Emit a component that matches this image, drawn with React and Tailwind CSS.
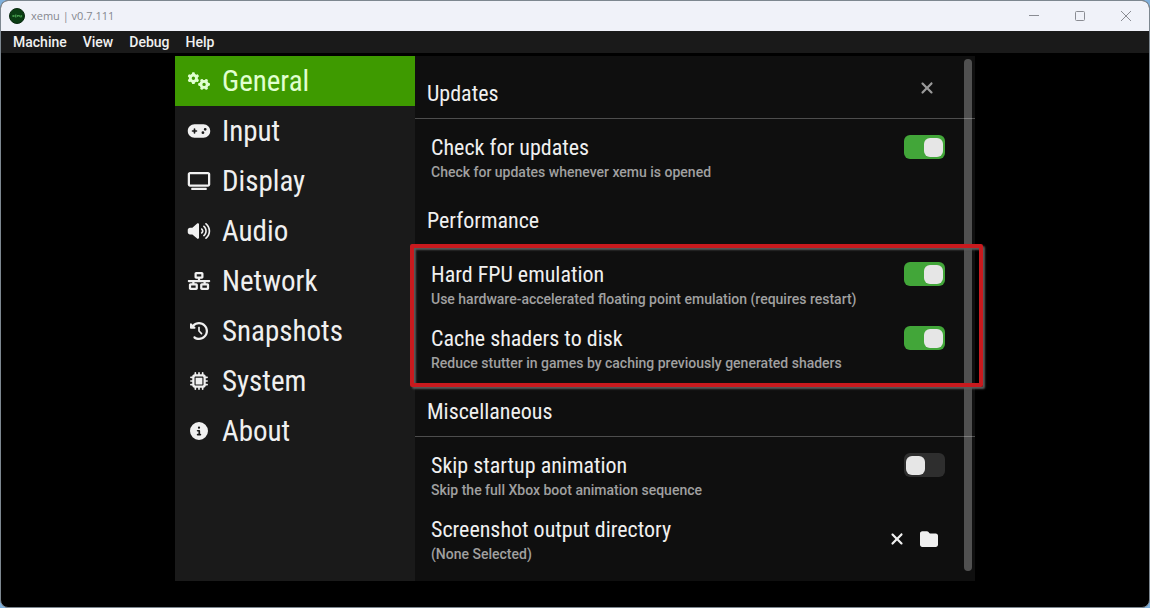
import React, { useState } from "react";
import {
    FaGears,
    FaGamepad,
    FaTv,
    FaVolumeHigh,
    FaNetworkWired,
    FaClockRotateLeft,
    FaMicrochip,
    FaCircleInfo,
    FaXmark,
    FaFolder,
} from "react-icons/fa6";

const menus = ["Machine", "View", "Debug", "Help"];

const tabs = [
    { name: "General", Icon: FaGears },
    { name: "Input", Icon: FaGamepad },
    { name: "Display", Icon: FaTv },
    { name: "Audio", Icon: FaVolumeHigh },
    { name: "Network", Icon: FaNetworkWired },
    { name: "Snapshots", Icon: FaClockRotateLeft },
    { name: "System", Icon: FaMicrochip },
    { name: "About", Icon: FaCircleInfo },
];

function TitleBar() {
    return (
        <header className="flex h-[30px] items-center justify-between bg-[#f0f2f9] pl-2">
            <div className="flex items-center gap-[6px]">
                <svg viewBox="0 0 16 16" className="h-4 w-4">
                    <circle cx="8" cy="8" r="7.5" fill="#0b3d14" stroke="#0a2a10" />
                    <path
                        d="M3.5 7l1.5 2m0-2l-1.5 2M7.5 7H6v2h1.5M6 8h1.5M8.5 9V7l.8.8.8-.8v2M11 7v2h1.6V7"
                        fill="none"
                        stroke="#5fc465"
                        strokeWidth="0.6"
                    />
                </svg>
                <h1 className="font-['Open_Sans',sans-serif] text-[11px] text-[#85888f]">
                    xemu | v0.7.111
                </h1>
            </div>
            <div className="flex h-full text-[#8a8c93]">
                <button type="button" aria-label="Minimize" className="flex w-[46px] items-center justify-center">
                    <svg viewBox="0 0 10 10" className="h-[10px] w-[10px]" fill="none" stroke="currentColor">
                        <path d="M0 4.5h10" />
                    </svg>
                </button>
                <button type="button" aria-label="Maximize" className="flex w-[46px] items-center justify-center">
                    <svg viewBox="0 0 10 10" className="h-[10px] w-[10px]" fill="none" stroke="currentColor">
                        <rect x="0.5" y="0.5" width="9" height="9" rx="1" />
                    </svg>
                </button>
                <button type="button" aria-label="Close" className="flex w-[46px] items-center justify-center">
                    <svg viewBox="0 0 10 10" className="h-[10px] w-[10px]" fill="none" stroke="currentColor">
                        <path d="M0 0l10 10M10 0L0 10" />
                    </svg>
                </button>
            </div>
        </header>
    );
}

function MenuBar() {
    return (
        <nav className="flex h-[22px] items-center gap-4 bg-[#1a1a1a] px-3 text-sm font-medium text-[#f0f0f0]">
            {menus.map((menu) => (
                <button key={menu} type="button">
                    {menu}
                </button>
            ))}
        </nav>
    );
}

function Section({ title, children }) {
    return (
        <section>
            <h2 className="flex h-[51px] items-center border-b border-[#4d4d4d] pl-3 font-['Roboto_Condensed','Liberation_Sans_Narrow',Roboto,sans-serif] text-[22px] text-[#f0f0f0]">
                {title}
            </h2>
            <div className="relative pt-3">{children}</div>
        </section>
    );
}

function Row({ title, description, id, children }) {
    const Title = id ? "label" : "h3";
    return (
        <div className="flex h-16 items-start justify-between pr-[30px] pl-4">
            <div className="pt-px">
                <Title
                    htmlFor={id}
                    className="block font-['Roboto_Condensed','Liberation_Sans_Narrow',Roboto,sans-serif] text-[22px] leading-8 text-[#f0f0f0]"
                >
                    {title}
                </Title>
                <p className="text-sm leading-4 font-medium text-[#a0a0a0]">
                    {description}
                </p>
            </div>
            {children}
        </div>
    );
}

function Toggle({ id, title, description, defaultChecked }) {
    const [checked, setChecked] = useState(defaultChecked);

    return (
        <Row id={id} title={title} description={description}>
            <input
                id={id}
                type="checkbox"
                role="switch"
                checked={checked}
                onChange={(e) => setChecked(e.target.checked)}
                className="mt-1 flex h-6 w-[41px] shrink-0 cursor-pointer appearance-none items-center rounded-md bg-[#2e2e2e] px-[2px] before:h-[19px] before:w-[19px] before:rounded-md before:bg-[#e6e6e6] checked:justify-end checked:bg-[#42a639]"
            />
        </Row>
    );
}

function App() {
    const [active, setActive] = useState("General");

    return (
        <div className="flex min-h-screen flex-col bg-[#7fb0dc] font-[Roboto,sans-serif]">
            <div className="flex flex-1 flex-col overflow-hidden rounded-lg border border-[#7d8790] bg-black">
                <TitleBar />
                <MenuBar />
                <main className="mx-auto mt-[3px] flex w-full max-w-[800px] flex-1 flex-col pb-[26px]">
                    <div className="relative flex flex-1 bg-[#0f0f0f]">
                        <nav className="w-[240px] shrink-0 bg-[#1a1a1a]">
                            {tabs.map(({ name, Icon }) => (
                                <button
                                    key={name}
                                    type="button"
                                    onClick={() => setActive(name)}
                                    className={`flex h-[50px] w-full items-center gap-[11px] pl-3 text-left font-['Roboto_Condensed','Liberation_Sans_Narrow',Roboto,sans-serif] text-[29px] ${
                                        active === name
                                            ? "bg-[#3e9a00] text-[#e0ffd0]"
                                            : "text-[#f0f0f0]"
                                    }`}
                                >
                                    <Icon className="h-[18px] w-6" />
                                    <span className="pt-[2px]">{name}</span>
                                </button>
                            ))}
                        </nav>
                        <div className="flex-1 pt-3 pb-1">
                            <Section title="Updates">
                                <Toggle
                                    id="updates"
                                    title="Check for updates"
                                    description="Check for updates whenever xemu is opened"
                                    defaultChecked
                                />
                            </Section>
                            <Section title="Performance">
                                <Toggle
                                    id="fpu"
                                    title="Hard FPU emulation"
                                    description="Use hardware-accelerated floating point emulation (requires restart)"
                                    defaultChecked
                                />
                                <Toggle
                                    id="shaders"
                                    title="Cache shaders to disk"
                                    description="Reduce stutter in games by caching previously generated shaders"
                                    defaultChecked
                                />
                                {/* callout frame round the two performance settings */}
                                <div className="pointer-events-none absolute -top-[2px] -right-2 -bottom-px -left-[5px] z-10 rounded-xs border-4 border-[#c81a1e] shadow-[2px_2px_2px_#5a5a5a,inset_2px_2px_2px_#5a5a5a]" />
                            </Section>
                            <Section title="Miscellaneous">
                                <Toggle
                                    id="animation"
                                    title="Skip startup animation"
                                    description="Skip the full Xbox boot animation sequence"
                                    defaultChecked={false}
                                />
                                <Row title="Screenshot output directory" description="(None Selected)">
                                    <div className="mt-4 flex gap-2 pr-1 text-[#f0f0f0]">
                                        <button type="button" aria-label="Clear directory" className="flex h-5 w-6 items-center justify-center">
                                            <FaXmark className="h-[18px] w-[18px]" />
                                        </button>
                                        <button type="button" aria-label="Choose directory" className="flex h-5 w-6 items-center justify-center">
                                            <FaFolder className="h-[18px] w-[18px]" />
                                        </button>
                                    </div>
                                </Row>
                            </Section>
                        </div>
                        <button
                            type="button"
                            aria-label="Close settings"
                            className="absolute top-[22px] right-[38px] flex h-5 w-5 items-center justify-center text-[#9a9a9a]"
                        >
                            <FaXmark className="h-[18px] w-[18px]" />
                        </button>
                        <div className="absolute top-[3px] right-[3px] bottom-[10px] w-2 rounded bg-white/27" />
                    </div>
                </main>
            </div>
        </div>
    );
}

export default App;
